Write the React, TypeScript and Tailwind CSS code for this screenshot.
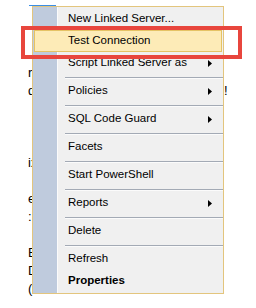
import React from 'react'

type Item =
  | { kind: 'item'; label: string; sub?: boolean; active?: boolean; bold?: boolean }
  | { kind: 'sep' }

const items: Item[] = [
  { kind: 'item', label: 'New Linked Server...' },
  { kind: 'item', label: 'Test Connection', active: true },
  { kind: 'item', label: 'Script Linked Server as', sub: true },
  { kind: 'sep' },
  { kind: 'item', label: 'Policies', sub: true },
  { kind: 'sep' },
  { kind: 'item', label: 'SQL Code Guard', sub: true },
  { kind: 'sep' },
  { kind: 'item', label: 'Facets' },
  { kind: 'sep' },
  { kind: 'item', label: 'Start PowerShell' },
  { kind: 'sep' },
  { kind: 'item', label: 'Reports', sub: true },
  { kind: 'sep' },
  { kind: 'item', label: 'Delete' },
  { kind: 'sep' },
  { kind: 'item', label: 'Refresh' },
  { kind: 'item', label: 'Properties', bold: true },
]

// tree rows peeking out from under the menu, 18px apart
const treeRows = ['', '', '', 'rtl', 'db', '', '', '', 'ix', '', 'ev', ':', '', 'Err', 'Dim', '(']

const Arrow = () => (
  <svg width="4" height="7" viewBox="0 0 4 7" className="block">
    <polygon points="0,0 4,3.5 0,7" fill="#000" />
  </svg>
)

const MenuRow = ({ item }: { item: Item }) => {
  if (item.kind === 'sep') {
    return (
      <div className="h-[6px] pl-[32px] pt-[3px]">
        <div className="h-px bg-[#a3aab5]" />
        <div className="h-px bg-[#fbfbfb]" />
      </div>
    )
  }
  if (item.active) {
    return (
      <div className="mx-px flex h-[22px] items-center border border-[#e5c365] bg-[#fdebb7] pl-[33px] pr-[10px]">
        <span className="flex-1">{item.label}</span>
      </div>
    )
  }
  return (
    <div className="flex h-[22px] items-center pl-[35px] pr-[11px]">
      <span className={`flex-1 ${item.bold ? 'font-bold' : ''}`}>{item.label}</span>
      {item.sub && <Arrow />}
    </div>
  )
}

export default function App() {
  return (
    <div className="relative h-[308px] w-[256px] overflow-hidden bg-white font-['Liberation_Sans',Arial,sans-serif] text-black">
      {/* tree behind the menu */}
      <div className="ml-[29px] mt-[5px] h-px w-[27px] bg-[#3a8ee6]" />
      <div className="mt-[4px] text-[13px] leading-[18px]">
        {treeRows.map((t, i) => (
          <div key={i} className="flex h-[18px]">
            <span className="w-[224px] pl-[28px]">{t}</span>
            {i === 4 && <span>!</span>}
          </div>
        ))}
      </div>

      {/* context menu */}
      <div className="absolute left-[32px] top-[6px] h-[288px] w-[192px] border border-[#e3c57d] bg-[linear-gradient(to_right,#bfcbdd_24px,#fbfbfb_24px,#fbfbfb_25px,#f0f0f0_25px)] py-px text-[11.5px]">
        {items.map((it, i) => (
          <MenuRow key={i} item={it} />
        ))}
      </div>

      {/* annotation box */}
      <div className="absolute left-[21px] top-[26px] h-[33px] w-[221px] border-4 border-[#e8463d]" />
    </div>
  )
}
